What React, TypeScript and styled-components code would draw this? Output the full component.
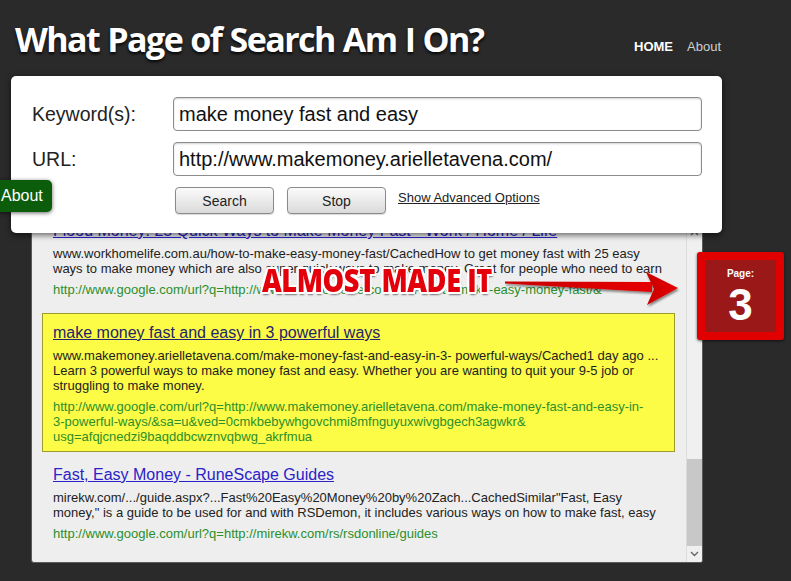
import React from "react";
import styled, { createGlobalStyle } from "styled-components";

const GlobalStyle = createGlobalStyle`
  html, body { margin: 0; padding: 0; background: #2a2a2a; }
  body { font-family: "Liberation Sans", Arial, sans-serif; }
  * { box-sizing: border-box; }
`;

const Page = styled.div`
  position: relative;
  width: 791px;
  height: 581px;
  overflow: hidden;
  background: #2a2a2a;
`;

const Header = styled.header`
  display: flex;
  justify-content: space-between;
  align-items: flex-start;
  height: 76px;
  padding: 17px 70px 0 15px;
`;

const Title = styled.h1`
  margin: 0;
  font-family: "Open Sans", sans-serif;
  font-weight: 700;
  font-size: 34px;
  line-height: 44px;
  letter-spacing: -1.6px;
  word-spacing: 1px;
  color: #ffffff;
  text-shadow: 0 2px 3px rgba(0, 0, 0, 0.85);
`;

const Nav = styled.nav`
  display: flex;
  gap: 14px;
  padding-top: 22px;
`;

const NavLink = styled.a<{ $active?: boolean }>`
  font-size: 13px;
  line-height: 16px;
  color: ${(p) => (p.$active ? "#ffffff" : "#cfcfcf")};
  font-weight: ${(p) => (p.$active ? 700 : 400)};
  text-decoration: none;
`;

const SearchCard = styled.form`
  position: relative;
  z-index: 2;
  margin-left: 11px;
  width: 711px;
  background: #ffffff;
  border-radius: 5px;
  box-shadow: 0 2px 6px rgba(0, 0, 0, 0.6);
  padding: 21px 20px 19px 21px;
  display: grid;
  grid-template-columns: 141px 529px;
  row-gap: 11px;
  align-items: center;
`;

const FieldLabel = styled.label`
  font-size: 19.5px;
  color: #222;
`;

const TextField = styled.input`
  height: 34px;
  width: 100%;
  border: 1px solid #8c8c8c;
  border-radius: 4px;
  padding: 0 5px;
  font-family: "Liberation Sans", Arial, sans-serif;
  font-size: 20px;
  color: #111;
  background: #fff;
  box-shadow: inset 0 1px 2px rgba(0, 0, 0, 0.18);
  outline: none;
`;

const Actions = styled.div`
  grid-column: 2;
  display: flex;
  align-items: center;
  padding-left: 2px;
  height: 27px;
`;

const ActionButton = styled.button`
  width: 99px;
  height: 27px;
  margin-right: 13px;
  border: 1px solid #8a8a8a;
  border-radius: 4px;
  background: linear-gradient(#fbfbfb, #dadada);
  font-family: "Liberation Sans", Arial, sans-serif;
  font-size: 14px;
  color: #222;
  padding: 0;
  box-shadow: 0 1px 1px rgba(0, 0, 0, 0.15);
`;

const OptionsLink = styled.a`
  font-size: 13px;
  color: #222;
  text-decoration: underline;
  margin-left: -1px;
  margin-top: -6px;
`;

const ResultsPanel = styled.section`
  position: relative;
  z-index: 1;
  margin: -9px 0 0 31px;
  width: 672px;
  height: 339px;
  background: #eeeeee;
  border: 1px solid #5a5a5a;
  border-radius: 0 0 3px 3px;
  display: flex;
  overflow: hidden;
`;

const ResultsViewport = styled.div`
  flex: 1;
  overflow: hidden;
  padding: 0 11px 0 10px;
`;

const ResultsList = styled.ol`
  list-style: none;
  margin: -14px 0 0;
  padding: 0;
`;

const ResultItem = styled.li<{ $highlight?: boolean }>`
  padding: 9px 10px 7px;
  border: 1px solid ${(p) => (p.$highlight ? "#9c9c2c" : "transparent")};
  background: ${(p) => (p.$highlight ? "#fcfc46" : "transparent")};
  margin: ${(p) => (p.$highlight ? "8px 0 3px" : "0 0 1px")};
  white-space: nowrap;
`;

const ResultTitle = styled.div`
  font-size: 16px;
  line-height: 20px;
  margin-bottom: 5px;
`;

const ResultLink = styled.a<{ $visited?: boolean }>`
  color: ${(p) => (p.$visited ? "#24246e" : "#2a22c8")};
  text-decoration: underline;
`;

const Snippet = styled.div`
  font-size: 13px;
  line-height: 15px;
  color: #222;
`;

const SourceUrl = styled.div`
  font-size: 13px;
  line-height: 15px;
  color: #2b8f2b;
  margin-top: 6px;
`;

const Line = styled.span`
  display: block;
`;

const ScrollBar = styled.div`
  width: 16px;
  display: flex;
  flex-direction: column;
  background: #f0f0f0;
  border-left: 1px solid #dcdcdc;
`;

const ScrollButton = styled.div`
  height: 16px;
  display: flex;
  align-items: center;
  justify-content: center;
  color: #666;
`;

const ScrollTrack = styled.div`
  flex: 1;
  display: flex;
  flex-direction: column;
  justify-content: flex-end;
`;

const ScrollThumb = styled.div`
  height: 87px;
  background: #c8c8c8;
`;

const SideTab = styled.a`
  position: absolute;
  z-index: 3;
  left: -6px;
  top: 180px;
  width: 58px;
  height: 32px;
  padding-left: 7px;
  border-radius: 5px;
  background: #0b5d0b;
  color: #fff;
  font-size: 16px;
  line-height: 32px;
  text-decoration: none;
  box-shadow: 0 1px 4px rgba(0, 0, 0, 0.6);
`;

const Annotation = styled.div`
  position: absolute;
  z-index: 4;
  left: 262px;
  top: 264px;
  font-family: "Open Sans", sans-serif;
  font-weight: 800;
  font-size: 32px;
  line-height: 32px;
  letter-spacing: -0.5px;
  color: #e3000b;
  transform: scaleX(0.85);
  transform-origin: left center;
  white-space: nowrap;
  text-shadow: 2px 0 0 #fff, -2px 0 0 #fff, 0 2px 0 #fff, 0 -2px 0 #fff,
    2px 2px 0 #fff, -2px -2px 0 #fff, 2px -2px 0 #fff, -2px 2px 0 #fff,
    1px 3px 2px rgba(0, 0, 0, 0.5);
`;

const ArrowSvg = styled.svg`
  position: absolute;
  z-index: 4;
  left: 500px;
  top: 265px;
`;

const PageBadge = styled.div`
  position: absolute;
  z-index: 4;
  left: 697px;
  top: 252px;
  width: 87px;
  height: 88px;
  border: 8px solid #e10000;
  border-radius: 3px;
  background: #9b1818;
  display: flex;
  flex-direction: column;
  align-items: center;
  padding-top: 8px;
  color: #fff;
  box-shadow: 0 1px 3px rgba(0, 0, 0, 0.6);
`;

const BadgeLabel = styled.div`
  font-size: 10px;
  line-height: 12px;
  font-weight: 700;
`;

const BadgeNumber = styled.div`
  font-size: 44px;
  line-height: 44px;
  font-weight: 700;
  margin-top: 3px;
`;

const Chevron = ({ up }: { up?: boolean }) => (
  <svg width="9" height="6" viewBox="0 0 9 6">
    <polyline
      points={up ? "1,5 4.5,1.5 8,5" : "1,1 4.5,4.5 8,1"}
      fill="none"
      stroke="currentColor"
      strokeWidth="1.4"
    />
  </svg>
);

type Result = {
  title: string;
  snippet: string[];
  url: string[];
  highlight?: boolean;
};

const results: Result[] = [
  {
    title: "Flood Money: 25 Quick Ways to Make Money Fast - Work / Home / Life",
    snippet: [
      "www.workhomelife.com.au/how-to-make-easy-money-fast/CachedHow to get money fast with 25 easy",
      "ways to make money which are also super quick ways to make money. Great for people who need to earn",
    ],
    url: ["http://www.google.com/url?q=http://www.workhomelife.com.au/how-to-make-easy-money-fast/&"],
  },
  {
    title: "make money fast and easy in 3 powerful ways",
    snippet: [
      "www.makemoney.arielletavena.com/make-money-fast-and-easy-in-3- powerful-ways/Cached1 day ago ...",
      "Learn 3 powerful ways to make money fast and easy. Whether you are wanting to quit your 9-5 job or",
      "struggling to make money.",
    ],
    url: [
      "http://www.google.com/url?q=http://www.makemoney.arielletavena.com/make-money-fast-and-easy-in-",
      "3-powerful-ways/&sa=u&ved=0cmkbebywhgovchmi8mfnguyuxwivgbgech3agwkr&",
      "usg=afqjcnedzi9baqddbcwznvqbwg_akrfmua",
    ],
    highlight: true,
  },
  {
    title: "Fast, Easy Money - RuneScape Guides",
    snippet: [
      'mirekw.com/.../guide.aspx?...Fast%20Easy%20Money%20by%20Zach...CachedSimilar"Fast, Easy',
      'money," is a guide to be used for and with RSDemon, it includes various ways on how to make fast, easy',
    ],
    url: ["http://www.google.com/url?q=http://mirekw.com/rs/rsdonline/guides"],
  },
];

export default function App() {
  return (
    <>
      <GlobalStyle />
      <Page>
        <Header>
          <Title>What Page of Search Am I On?</Title>
          <Nav>
            <NavLink $active href="#">HOME</NavLink>
            <NavLink href="#">About</NavLink>
          </Nav>
        </Header>

        <SearchCard onSubmit={(e) => e.preventDefault()}>
          <FieldLabel>Keyword(s):</FieldLabel>
          <TextField defaultValue="make money fast and easy" />
          <FieldLabel>URL:</FieldLabel>
          <TextField defaultValue="http://www.makemoney.arielletavena.com/" />
          <Actions>
            <ActionButton type="button">Search</ActionButton>
            <ActionButton type="button">Stop</ActionButton>
            <OptionsLink href="#">Show Advanced Options</OptionsLink>
          </Actions>
        </SearchCard>

        <ResultsPanel>
          <ResultsViewport>
            <ResultsList>
              {results.map((r, i) => (
                <ResultItem key={i} $highlight={r.highlight}>
                  <ResultTitle>
                    <ResultLink href="#" $visited={r.highlight}>
                      {r.title}
                    </ResultLink>
                  </ResultTitle>
                  <Snippet>
                    {r.snippet.map((l, j) => (
                      <Line key={j}>{l}</Line>
                    ))}
                  </Snippet>
                  <SourceUrl>
                    {r.url.map((l, j) => (
                      <Line key={j}>{l}</Line>
                    ))}
                  </SourceUrl>
                </ResultItem>
              ))}
            </ResultsList>
          </ResultsViewport>
          <ScrollBar>
            <ScrollButton>
              <Chevron up />
            </ScrollButton>
            <ScrollTrack>
              <ScrollThumb />
            </ScrollTrack>
            <ScrollButton>
              <Chevron />
            </ScrollButton>
          </ScrollBar>
        </ResultsPanel>

        <SideTab href="#">About</SideTab>

        <Annotation>ALMOST MADE IT</Annotation>
        <ArrowSvg width="185" height="50" viewBox="0 0 185 50">
          <defs>
            <linearGradient id="arrowFill" x1="0" y1="0" x2="1" y2="0">
              <stop offset="0" stopColor="#c80000" />
              <stop offset="1" stopColor="#e60000" />
            </linearGradient>
            <filter id="arrowShadow" x="-10%" y="-30%" width="120%" height="160%">
              <feDropShadow dx="1" dy="2" stdDeviation="1.2" floodColor="#000" floodOpacity="0.45" />
            </filter>
          </defs>
          <g filter="url(#arrowShadow)" fill="url(#arrowFill)">
            <polygon points="5,16.5 152,17 152,27 5,18.5" />
            <polygon points="146,7 178,23 147,40 154,24" />
          </g>
        </ArrowSvg>

        <PageBadge>
          <BadgeLabel>Page:</BadgeLabel>
          <BadgeNumber>3</BadgeNumber>
        </PageBadge>
      </Page>
    </>
  );
}
